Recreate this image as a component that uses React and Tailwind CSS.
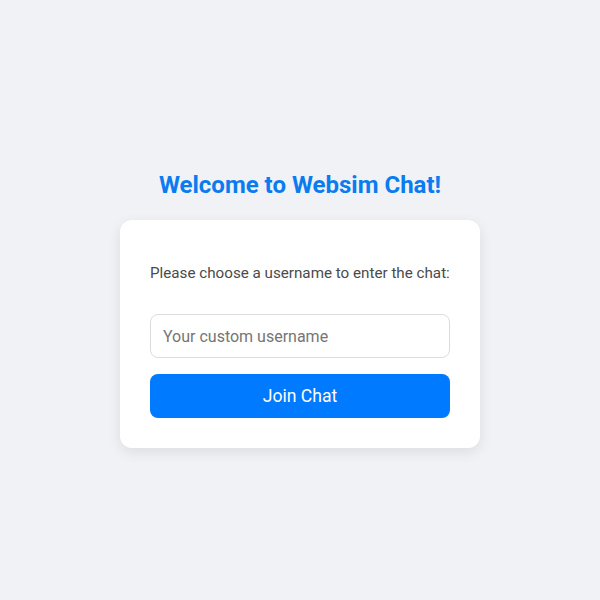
import React from "react"

function App() {
	return (
		<div
			className="min-h-screen bg-[#f0f2f5] flex flex-col items-center pt-[170px]"
			style={{ fontFamily: "Roboto, 'Liberation Sans', sans-serif" }}
		>
			<h1 className="text-[24px] leading-[30px] font-bold text-[#0a7cf0] mb-5">
				Welcome to Websim Chat!
			</h1>

			<div className="w-[360px] bg-white rounded-[12px] p-[30px] shadow-[0_4px_14px_rgba(0,0,0,0.09)]">
				<p className="mt-[12px] mb-[30px] text-[15.2px] leading-[22px] text-[#4a4a4a] whitespace-nowrap">
					Please choose a username to enter the chat:
				</p>
				<input
					type="text"
					placeholder="Your custom username"
					className="w-full h-[44px] px-3 border border-[#dcdcdc] rounded-[8px] text-[16px] text-[#333] placeholder:text-[#757575] outline-none"
				/>
				<button className="mt-4 w-full h-[44px] bg-[#007bff] text-white text-[17.6px] rounded-[8px]">
					Join Chat
				</button>
			</div>
		</div>
	)
}

export default App;
